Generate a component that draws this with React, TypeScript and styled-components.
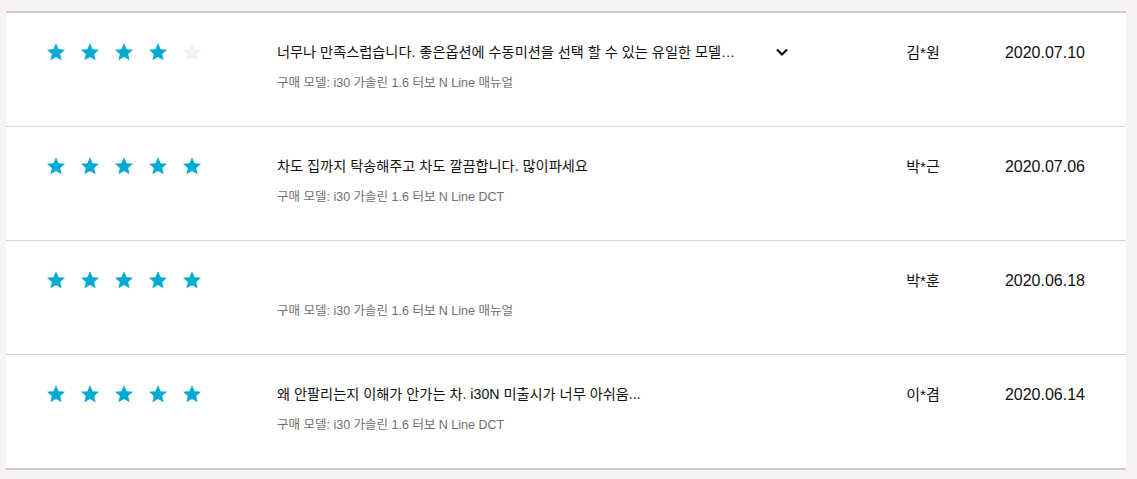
import React from 'react';
import styled, { createGlobalStyle } from 'styled-components';

const GlobalStyle = createGlobalStyle`
    html, body {
        margin: 0;
        padding: 0;
        background: #f6f3f2;
        font-family: 'Liberation Sans', 'Noto Sans CJK KR', sans-serif;
    }
`;

const Page = styled.div`
    padding: 11px 11px 10px 6px;
`;

const ReviewList = styled.ul`
    list-style: none;
    margin: 0;
    padding: 0;
    width: 1120px;
    background: #ffffff;
    border-top: 2px solid #cdcdcd;
    border-bottom: 2px solid #cdcdcd;
`;

const ReviewRow = styled.li`
    display: flex;
    align-items: flex-start;
    height: 113px;
    padding: 0 41px 0 40px;
    box-sizing: border-box;
    & + & {
        border-top: 1px solid #d4d4d4;
        height: 114px;
    }
`;

const Stars = styled.div`
    display: flex;
    gap: 14px;
    width: 231px;
    padding-top: 29px;
    flex-shrink: 0;
`;

const StarIcon = styled.svg<{ $on: boolean }>`
    width: 20px;
    height: 20px;
    fill: ${(p) => (p.$on ? '#00aad2' : '#eef1f6')};
`;

const Content = styled.div`
    width: 462px;
    padding-top: 29px;
    flex-shrink: 0;
`;

const Title = styled.p`
    margin: 0;
    height: 20px;
    line-height: 20px;
    font-size: 14.2px;
    color: #111;
    white-space: nowrap;
    overflow: hidden;
    text-overflow: ellipsis;
`;

const ModelInfo = styled.p`
    margin: 12px 0 0;
    line-height: 18px;
    font-size: 12.5px;
    color: #6f6f6f;
`;

const ToggleCol = styled.div`
    width: 86px;
    padding-top: 31px;
    display: flex;
    justify-content: center;
    flex-shrink: 0;
`;

const Chevron = styled.svg`
    width: 16px;
    height: 16px;
    stroke: #111;
    fill: none;
    stroke-width: 2.2;
`;

const Writer = styled.div`
    width: 96px;
    margin-left: 50px;
    padding-top: 30px;
    text-align: center;
    font-size: 15px;
    line-height: 20px;
    color: #111;
    flex-shrink: 0;
`;

const DateCol = styled.div`
    flex: 1;
    padding-top: 30px;
    text-align: right;
    font-size: 16px;
    line-height: 20px;
    color: #111;
`;

interface Review {
    score: number;
    title: string;
    model: string;
    writer: string;
    date: string;
    more?: boolean;
}

const reviews: Review[] = [
    {
        score: 4,
        title: '너무나 만족스럽습니다. 좋은옵션에 수동미션을 선택 할 수 있는 유일한 모델…',
        model: '구매 모델: i30 가솔린 1.6 터보 N Line 매뉴얼',
        writer: '김*원',
        date: '2020.07.10',
        more: true,
    },
    {
        score: 5,
        title: '차도 집까지 탁송해주고 차도 깔끔합니다. 많이파세요',
        model: '구매 모델: i30 가솔린 1.6 터보 N Line DCT',
        writer: '박*근',
        date: '2020.07.06',
    },
    {
        score: 5,
        title: '',
        model: '구매 모델: i30 가솔린 1.6 터보 N Line 매뉴얼',
        writer: '박*훈',
        date: '2020.06.18',
    },
    {
        score: 5,
        title: '왜 안팔리는지 이해가 안가는 차. i30N 미출시가 너무 아쉬움...',
        model: '구매 모델: i30 가솔린 1.6 터보 N Line DCT',
        writer: '이*겸',
        date: '2020.06.14',
    },
];

function Star({ on }: { on: boolean }) {
    return (
        <StarIcon $on={on} viewBox="0 0 24 24">
            <path d="M12 1.5l3.1 7.1 7.7.7-5.8 5.1 1.7 7.6L12 18l-6.7 4 1.7-7.6-5.8-5.1 7.7-.7z" />
        </StarIcon>
    );
}

export default function App() {
    return (
        <Page>
            <GlobalStyle />
            <ReviewList>
                {reviews.map((r, i) => (
                    <ReviewRow key={i}>
                        <Stars>
                            {[0, 1, 2, 3, 4].map((n) => (
                                <Star key={n} on={n < r.score} />
                            ))}
                        </Stars>
                        <Content>
                            <Title>{r.title}</Title>
                            <ModelInfo>{r.model}</ModelInfo>
                        </Content>
                        <ToggleCol>
                            {r.more && (
                                <Chevron viewBox="0 0 16 16">
                                    <path d="M3 5.5l5 5 5-5" />
                                </Chevron>
                            )}
                        </ToggleCol>
                        <Writer>{r.writer}</Writer>
                        <DateCol>{r.date}</DateCol>
                    </ReviewRow>
                ))}
            </ReviewList>
        </Page>
    );
}
